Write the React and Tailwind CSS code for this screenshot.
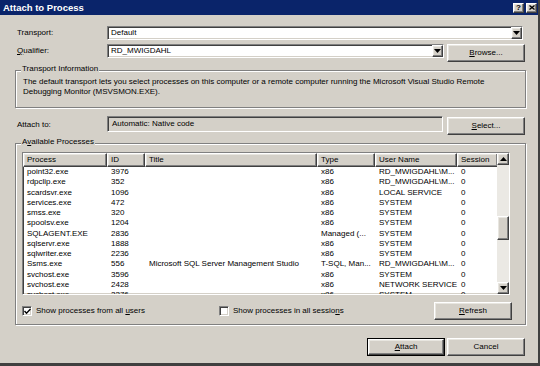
import React from 'react';

const rows = [
  ['point32.exe', '3976', '', 'x86', 'RD_MWIGDAHL\\M...', '0'],
  ['rdpclip.exe', '352', '', 'x86', 'RD_MWIGDAHL\\M...', '0'],
  ['scardsvr.exe', '1096', '', 'x86', 'LOCAL SERVICE', '0'],
  ['services.exe', '472', '', 'x86', 'SYSTEM', '0'],
  ['smss.exe', '320', '', 'x86', 'SYSTEM', '0'],
  ['spoolsv.exe', '1204', '', 'x86', 'SYSTEM', '0'],
  ['SQLAGENT.EXE', '2836', '', 'Managed (...', 'SYSTEM', '0'],
  ['sqlservr.exe', '1888', '', 'x86', 'SYSTEM', '0'],
  ['sqlwriter.exe', '2236', '', 'x86', 'SYSTEM', '0'],
  ['Ssms.exe', '556', 'Microsoft SQL Server Management Studio', 'T-SQL, Man...', 'RD_MWIGDAHL\\M...', '0'],
  ['svchost.exe', '3596', '', 'x86', 'SYSTEM', '0'],
  ['svchost.exe', '2428', '', 'x86', 'NETWORK SERVICE', '0'],
  ['svchost.exe', '2276', '', 'x86', 'SYSTEM', '0'],
];

const cols = [
  { label: 'Process', w: 'w-[84px]' },
  { label: 'ID', w: 'w-[38px]' },
  { label: 'Title', w: 'w-[172px]' },
  { label: 'Type', w: 'w-[58px]' },
  { label: 'User Name', w: 'w-[82px]' },
  { label: 'Session', w: 'w-[41px]' },
];

const raised =
  'border border-t-white border-l-white border-b-[#404040] border-r-[#404040] shadow-[inset_-1px_-1px_0_#808080,inset_1px_1px_0_#e8e6e0]';
const sunken =
  'border border-t-[#808080] border-l-[#808080] border-b-white border-r-white shadow-[inset_1px_1px_0_#404040,inset_-1px_-1px_0_#d4d0c8]';

function Arrow({ down = true }) {
  return (
    <svg width="7" height="4" viewBox="0 0 7 4">
      {down ? <path d="M0 0h7L3.5 4z" fill="#000" /> : <path d="M0 4h7L3.5 0z" fill="#000" />}
    </svg>
  );
}

function Combo({ text, w }) {
  return (
    <div className={`${w} h-[14px] bg-white ${sunken} flex items-center`}>
      <span className="flex-1 pl-[3px] leading-none">{text}</span>
      <div className={`w-[11px] h-[12px] bg-[#d4d0c8] ${raised} flex items-center justify-center`}>
        <Arrow />
      </div>
    </div>
  );
}

function Button({ children, def = false, className = '' }) {
  return (
    <div className={`w-[78px] h-[18px] shrink-0 ${def ? 'border border-black' : ''} ${className}`}>
      <div className={`h-full w-full bg-[#d4d0c8] ${raised} flex items-center justify-center`}>{children}</div>
    </div>
  );
}

function Check({ checked }) {
  return (
    <div className={`w-[10px] h-[10px] shrink-0 bg-white ${sunken} flex items-center justify-center`}>
      {checked && (
        <svg width="7" height="7" viewBox="0 0 7 7">
          <path d="M0.5 3l2 2.2L6.5 1" stroke="#000" strokeWidth="1.4" fill="none" />
        </svg>
      )}
    </div>
  );
}

function Group({ title, className, children }) {
  return (
    <div className={`relative border border-[#808080] shadow-[inset_1px_1px_0_white,1px_1px_0_white] ${className}`}>
      <span className="absolute left-[5px] top-[-6px] px-[1px] bg-[#d4d0c8] leading-none">{title}</span>
      {children}
    </div>
  );
}

export default function App() {
  return (
    <div
      className="w-[540px] h-[366px] bg-[#d4d0c8] text-black text-[8px] overflow-hidden border-r-2 border-b-[3px] border-r-[#404040] border-b-[#404040]"
      style={{ fontFamily: '"Liberation Sans", Arial, sans-serif' }}
    >
      {/* title bar */}
      <div className="h-[15px] bg-[#0a246a] flex items-center pl-[3px] pr-[1px]">
        <span className="flex-1 text-white font-bold text-[9.5px] leading-none">Attach to Process</span>
        <div className={`w-[11px] h-[10px] bg-[#d4d0c8] ${raised} flex items-center justify-center mr-[2px] font-bold text-[8px] leading-none`}>?</div>
        <div className={`w-[11px] h-[10px] bg-[#d4d0c8] ${raised} flex items-center justify-center`}>
          <svg width="6" height="5" viewBox="0 0 6 5">
            <path d="M0.5 0.5l5 4M5.5 0.5l-5 4" stroke="#000" strokeWidth="1.3" />
          </svg>
        </div>
      </div>

      <div className="pl-[17px]">
        {/* Transport */}
        <div className="flex items-center mt-[11px]">
          <span className="w-[90px] leading-none">Transport:</span>
          <Combo text="Default" w="w-[416px]" />
        </div>

        {/* Qualifier */}
        <div className="flex items-start mt-[4px]">
          <span className="w-[90px] leading-none mt-[3px]">
            <u>Q</u>ualifier:
          </span>
          <Combo text="RD_MWIGDAHL" w="w-[337px]" />
          <Button className="ml-[3px]">
            <span>
              <u>B</u>rowse...
            </span>
          </Button>
        </div>

        {/* Transport information */}
        <Group title="Transport Information" className="w-[511px] h-[38px] mt-[8px] -ml-[2px]">
          <p className="pl-[7px] pt-[6px] leading-[10px]">
            The default transport lets you select processes on this computer or a remote computer running the Microsoft Visual Studio Remote
            <br />
            Debugging Monitor (MSVSMON.EXE).
          </p>
        </Group>

        {/* Attach to */}
        <div className="flex items-start mt-[8px]">
          <span className="w-[90px] leading-none mt-[5px]">Attach to:</span>
          <div className={`w-[336px] h-[16px] bg-[#d4d0c8] ${sunken} flex items-center pl-[4px] leading-none`}>
            Automatic: Native code
          </div>
          <Button className="ml-[4px] mt-[1px]">
            <span>
              <u>S</u>elect...
            </span>
          </Button>
        </div>

        {/* Available processes */}
        <Group
          title={
            <span>
              A<u>v</u>ailable Processes
            </span>
          }
          className="w-[511px] h-[182px] mt-[8px] -ml-[2px]"
        >
          <div className={`ml-[6px] mt-[8px] w-[488px] h-[143px] bg-white ${sunken} flex overflow-hidden`}>
            <div className="flex-1 overflow-hidden">
              <div className="flex h-[14px] bg-[#d4d0c8]">
                {cols.map((c) => (
                  <div key={c.label} className={`${c.w} shrink-0 ${raised} pl-[3px] flex items-center leading-none`}>
                    {c.label}
                  </div>
                ))}
              </div>
              {rows.map((r, i) => (
                <div key={i} className="flex h-[10.25px] items-center leading-none whitespace-nowrap">
                  {r.map((cell, j) => (
                    <div key={j} className={`${cols[j].w} shrink-0 pl-[4px]`}>
                      {cell}
                    </div>
                  ))}
                </div>
              ))}
            </div>
            {/* scrollbar */}
            <div className="w-[12px] shrink-0 bg-[#ebe9e4] flex flex-col">
              <div className={`h-[12px] bg-[#d4d0c8] ${raised} flex items-center justify-center`}>
                <Arrow down={false} />
              </div>
              <div className="h-[51px]" />
              <div className={`h-[24px] bg-[#d4d0c8] ${raised}`} />
              <div className="flex-1" />
              <div className={`h-[12px] bg-[#d4d0c8] ${raised} flex items-center justify-center`}>
                <Arrow />
              </div>
            </div>
          </div>

          <div className="flex items-center mt-[7px] ml-[6px]">
            <Check checked />
            <span className="ml-[4px] w-[183px] leading-none">
              Show processes from all <u>u</u>sers
            </span>
            <Check />
            <span className="ml-[4px] flex-1 leading-none">
              Show processes in all sessio<u>n</u>s
            </span>
            <Button className="mr-[13px]">
              <span>
                <u>R</u>efresh
              </span>
            </Button>
          </div>
        </Group>

        {/* bottom buttons */}
        <div className="flex justify-end mt-[13px] w-[508px]">
          <Button def>
            <span>
              <u>A</u>ttach
            </span>
          </Button>
          <Button className="ml-[2px]">Cancel</Button>
        </div>
      </div>
    </div>
  );
}
